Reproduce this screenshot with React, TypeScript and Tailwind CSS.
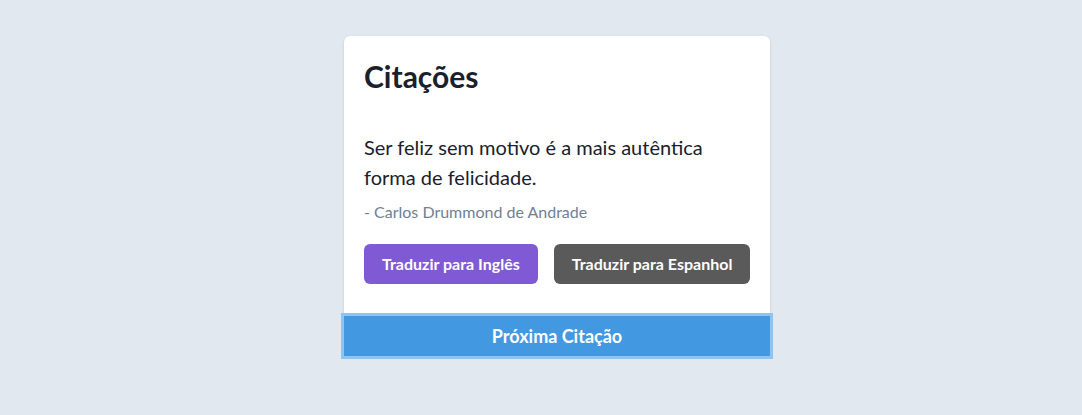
import React from "react";

export default function App() {
  return (
    <div
      className="min-h-[415px] w-full bg-[#e2e8f0] pt-9 pl-8 flex justify-center"
      style={{ fontFamily: 'Lato, "Noto Sans", sans-serif' }}
    >
      <div className="w-[426px] h-fit bg-white rounded-md shadow-[0_1px_3px_rgba(0,0,0,0.1),0_1px_2px_rgba(0,0,0,0.06)]">
        <div className="px-5 pt-5 pb-[32px]">
          <h1 className="text-[30px] leading-[40px] font-bold text-[#1a202c]">Citações</h1>
          <p className="mt-[36px] text-[20px] leading-[30px] text-[#1a202c]">
            Ser feliz sem motivo é a mais autêntica forma de felicidade.
          </p>
          <p className="mt-[8px] text-[16px] leading-[24px] text-[#718096]">- Carlos Drummond de Andrade</p>
          <div className="mt-[20px] flex gap-4">
            <button className="h-10 px-[18px] whitespace-nowrap shrink-0 rounded-md bg-[#805ad5] text-white text-[16px] font-bold">
              Traduzir para Inglês
            </button>
            <button className="h-10 px-[18px] whitespace-nowrap shrink-0 rounded-md bg-[#5a5a5a] text-white text-[16px] font-bold">
              Traduzir para Espanhol
            </button>
          </div>
        </div>
        <button className="w-full h-10 bg-[#4299e1] text-white text-[18px] font-bold outline-[3px] outline-solid outline-[#90c4f0]">
          Próxima Citação
        </button>
      </div>
    </div>
  );
}
